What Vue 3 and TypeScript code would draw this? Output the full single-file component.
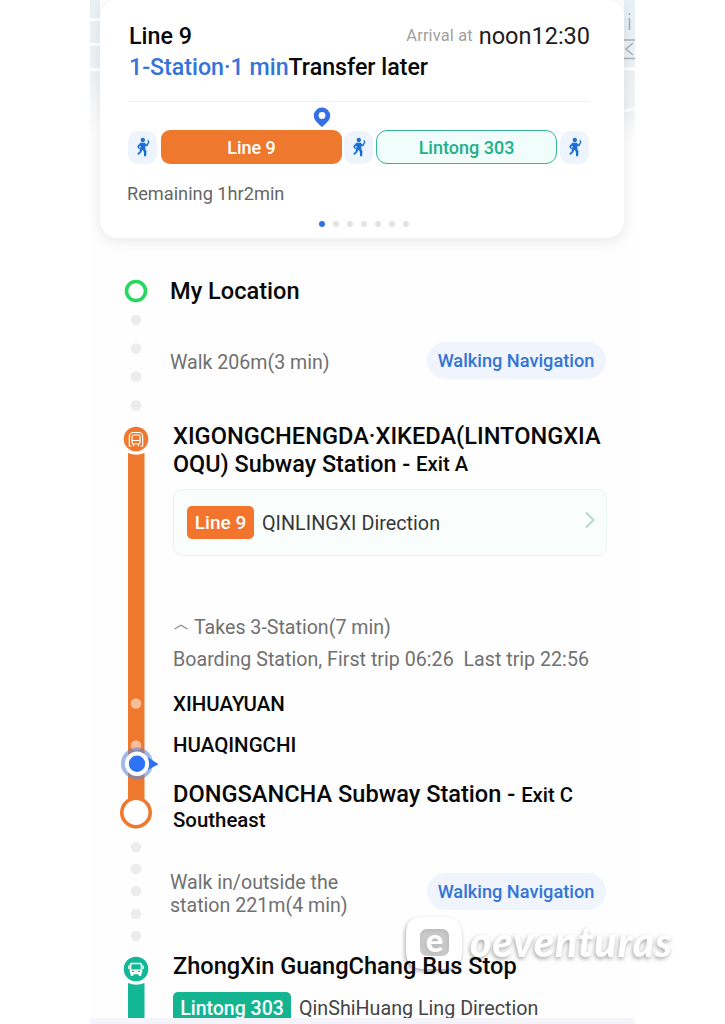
<script setup lang="ts">
interface Stop { name: string; cls: string }

const pages: number[] = [0, 1, 2, 3, 4, 5, 6]
const walkDots: number[] = [9, 37.5, 65.5, 94.5]
const transferDots: number[] = [12, 34, 56, 79, 101]
const stops: Stop[] = [
  { name: 'XIHUAYUAN', cls: 'stop-a' },
  { name: 'HUAQINGCHI', cls: 'stop-b' },
]
</script>

<template>
  <svg class="symbols" width="0" height="0" aria-hidden="true">
    <symbol id="walker" viewBox="0 0 16 22">
      <circle cx="7.800" cy="3" r="2.500" />
      <path d="M5 6h5l2 2 1.700-2.300L13 3.200l.9-.4 1.500 2.700-2.700 5-2-.8v3.800l1.300 2.400-.4 5.600H9.200l-.2-5L7.300 14l-1.200 3-3.500 3-1.200-1.300 2.800-2.900.8-4.400V9.200L3.500 10.500l1 2.500-1.300.7-1.800-3.700z" />
    </symbol>
  </svg>

  <div class="stage">
  <main class="screen">
    <header class="map">
      <div class="map-left"><i /><i /><i /></div>
      <div class="map-right">
        <svg width="12" height="125" viewBox="0 0 12 125">
          <path d="M5.500 18v12M5.500 13v2M0 40h11M0 58.500h11M9 43l-7 6 7 6" fill="none" stroke="#a9b1bb" stroke-width="1.600" />
          <path d="M0 69h11M0 111l11-3" stroke="#fff" stroke-width="3" />
        </svg>
      </div>
      <section class="card">
        <div class="headline">
          <span class="t line-title">Line 9</span>
          <span class="arrival"><span class="t arrival-label">Arrival at</span><span class="t arrival-time">noon12:30</span></span>
        </div>
        <div class="status"><span class="t status-blue">1-Station·1 min</span><span class="t status-next">Transfer later</span></div>
        <div class="legs">
          <span class="walk"><svg width="14" height="20"><use href="#walker" /></svg></span>
          <span class="leg orange">
            <span class="t">Line 9</span>
            <svg class="pin" width="18" height="21" viewBox="0 0 18 21">
              <path d="M9 .5a8.200 8.200 0 0 0-8.200 8.200c0 4.800 4.300 7.400 8.200 11.600 3.900-4.200 8.200-6.800 8.200-11.600A8.200 8.200 0 0 0 9 .5z" fill="#3470e4" />
              <circle cx="9" cy="8.500" r="3.400" fill="#fff" />
            </svg>
          </span>
          <span class="walk"><svg width="14" height="20"><use href="#walker" /></svg></span>
          <span class="leg green"><span class="t">Lintong 303</span></span>
          <span class="walk"><svg width="14" height="20"><use href="#walker" /></svg></span>
        </div>
        <div class="t remaining">Remaining 1hr2min</div>
        <div class="pager"><i v-for="p in pages" :key="p" :class="{ active: p === 0 }" /></div>
      </section>
    </header>

    <section class="row origin">
      <svg class="rail" width="50" height="41" viewBox="0 0 50 41">
        <circle cx="26" cy="21" r="9.500" fill="#fff" stroke="#25d95f" stroke-width="3.600" />
      </svg>
      <h2 class="t place origin-name">My Location</h2>
    </section>

    <section class="row walking first">
      <svg class="rail" width="50" height="110" viewBox="0 0 50 110">
        <circle v-for="y in walkDots" :key="y" cx="26" :cy="y" r="5.300" fill="#ececec" />
      </svg>
      <p class="t muted walk-a">Walk 206m(3 min)</p>
      <button class="nav"><span class="t">Walking Navigation</span></button>
    </section>

    <section class="row ride">
      <svg class="rail" width="54" height="414" viewBox="0 0 54 414">
        <circle cx="26" cy="18" r="12.300" fill="#ee792e" />
        <g fill="none" stroke="#fff" stroke-width="1.200">
          <path d="M21.500 25h-2.200v-9.500a4 4 0 0 1 4-4h5.400a4 4 0 0 1 4 4V25h-2.200" />
          <rect x="22" y="14" width="8" height="9" rx="1.500" />
          <path d="M22 19.500h8M23.500 23v2.200M28.500 23v2.200" />
        </g>
        <path d="M18 32q8 3.500 16.500 0v349h-16.500z" fill="#ee792e" />
        <circle cx="26" cy="282.500" r="5.300" fill="#f6bd98" />
        <circle cx="26" cy="324.500" r="5.300" fill="#f6bd98" />
        <circle cx="26" cy="391.500" r="14.200" fill="#fff" stroke="#ee792e" stroke-width="3.600" />
        <circle cx="27" cy="342.500" r="16" fill="#5c86d8" fill-opacity=".58" />
        <path d="M38 336.500l10.500 6.700-10.500 5.500z" fill="#2b6ef0" />
        <circle cx="27" cy="342.800" r="10.200" fill="#2f73f5" stroke="#fff" stroke-width="4" />
      </svg>
      <div class="details">
        <h2 class="place station"><span class="t station-1">XIGONGCHENGDA·XIKEDA(LINTONGXIA</span><span class="station-row"><span class="t station-2">OQU) Subway Station - </span><span class="t exit-a">Exit A</span></span></h2>
        <div class="direction">
          <span class="badge orange-bg"><span class="t">Line 9</span></span>
          <span class="t direction-name">QINLINGXI Direction</span>
          <svg class="chevron" width="12" height="18" viewBox="0 0 12 18"><path d="M2 1.500l7.500 7.500L2 16.500" fill="none" stroke="#b6d9cd" stroke-width="2" /></svg>
        </div>
        <div class="takes">
          <svg width="14" height="6" viewBox="0 0 14 6"><path d="M.5 5L7 1.300 13.500 5" fill="none" stroke="#8a8a8a" stroke-width="1.200" /></svg>
          <span class="t muted takes-text">Takes 3-Station(7 min)</span>
        </div>
        <p class="t muted boarding">Boarding Station, First trip 06:26&nbsp; Last trip 22:56</p>
        <p v-for="s in stops" :key="s.name" class="stop" :class="s.cls"><span class="t">{{ s.name }}</span></p>
        <h2 class="place final"><span class="t final-name">DONGSANCHA Subway Station - </span><span class="t exit-c">Exit C</span></h2>
        <p class="t southeast">Southeast</p>
      </div>
    </section>

    <section class="row walking second">
      <svg class="rail" width="50" height="115" viewBox="0 0 50 115">
        <circle v-for="y in transferDots" :key="y" cx="26" :cy="y" r="5.300" fill="#ececec" />
      </svg>
      <p class="muted two-line"><span class="t walk-b">Walk in/outside the</span><span class="t walk-c">station 221m(4 min)</span></p>
      <button class="nav"><span class="t">Walking Navigation</span></button>
    </section>

    <section class="row bus">
      <svg class="rail" width="50" height="68" viewBox="0 0 50 68">
        <circle cx="26" cy="19" r="12.300" fill="#12b896" />
        <rect x="20.500" y="13.500" width="11" height="10" rx="1.500" fill="none" stroke="#fff" stroke-width="1.600" />
        <path d="M20 19.500h12v4H20zM20.800 23h2.500v3h-2.500zM28.700 23h2.500v3h-2.500zM18.200 15.500h1.300v3.500h-1.300zM32.500 15.500h1.300v3.500h-1.300z" fill="#fff" />
        <path d="M22 21.300h2M28 21.300h2" stroke="#12b896" stroke-width="1.200" />
        <path d="M18 33q8 3.500 16.500 0v35h-16.500z" fill="#12b896" />
      </svg>
      <div class="details">
        <h2 class="place bus-name"><span class="t">ZhongXin GuangChang Bus Stop</span></h2>
        <div class="bus-line"><span class="badge green-bg"><span class="t">Lintong 303</span></span><span class="t bus-direction">QinShiHuang Ling Direction</span></div>
      </div>
    </section>
    <footer class="bottom" />
  </main>

    <div class="watermark">
      <svg width="60" height="60" viewBox="0 0 60 60">
        <path fill-rule="evenodd" d="M18 2h22q18 0 18 18v16q0 18-18 18H20Q2 54 2 36V18Q2 2 18 2zM24 14q-8 0-8 8v11q0 8 8 8h13q8 0 8-8V22q0-8-8-8z" fill="#fff" />
        <rect x="16" y="14" width="29" height="27" rx="8" fill="#c4c4c4" fill-opacity=".55" />
        <text x="30.500" y="37" text-anchor="middle" class="mark-e">e</text>
      </svg>
      <span class="t mark-text">oeventuras</span>
    </div>
  </div>
</template>

<style>
body { margin: 0; background: #fff; }
</style>

<style scoped>
.symbols { position: absolute; }
.stage { position: relative; width: 725px; height: 1024px; overflow: hidden; }
.screen { width: 545px; height: 1024px; margin-left: 90px; overflow: hidden; background: #fefefe; font-family: Roboto, "Liberation Sans", sans-serif; color: #080808; display: flex; flex-direction: column; }
.screen * { box-sizing: border-box; }
.t { white-space: pre; }
h2, p { margin: 0; font-weight: 500; }
.map { height: 270px; flex: none; display: grid; grid-template-columns: 10px 524px 11px; }
.map-left { height: 135px; background: linear-gradient(#e9f0f3, #f0f3f6 60%, #fefefe); display: flex; flex-direction: column; gap: 22px; padding-top: 18px; }
.map-left i { height: 3px; background: #fff; }
.map-right { grid-column: 3; grid-row: 1; height: 140px; background: linear-gradient(#e6f0f8, #eef1f4 50%, #f2f3f5 80%, #fefefe); }
.card { grid-column: 2; grid-row: 1; height: 238px; border-radius: 17px; background: #fff; box-shadow: 0 3px 14px rgba(0, 0, 0, .09); padding: 20px 34px 0 28px; display: flex; flex-direction: column; position: relative; }
.headline { display: flex; justify-content: space-between; align-items: center; height: 31px; padding-left: 1px; }
.line-title { font-size: 23.300px; font-weight: 500; }
.arrival { display: flex; align-items: center; gap: 6px; }
.arrival-label { font-size: 16.400px; color: #a0a0a0; letter-spacing: .15px; }
.arrival-time { font-size: 23.500px; color: #1c1c1c; }
.status { display: flex; height: 32px; margin-bottom: 2px; align-items: center; padding-left: 1px; font-size: 23.200px; font-weight: 500; }
.status-blue { color: #3473d9; }
.legs { border-top: 1px solid #f0f0f0; margin-top: 16px; height: 62px; padding-top: 29px; display: flex; align-items: center; gap: 4px; }
.walk { width: 29px; height: 33px; border-radius: 10px; background: #edf4fb; display: flex; align-items: center; justify-content: center; flex: none; }
.walk svg { fill: #1c6fd2; }
.leg { position: relative; width: 181px; height: 34px; border-radius: 9px; display: flex; align-items: center; justify-content: center; font-size: 18px; font-weight: 500; flex: none; }
.leg.orange { background: #ee792e; color: #fff; margin-right: -2px; }
.leg.green { background: #f0fdfa; border: 1.500px solid #35b699; color: #20af8a; border-radius: 11px; margin-left: -1px; margin-right: -1px; }
.pin { position: absolute; left: 152px; top: -23px; }
.remaining { font-size: 18.200px; color: #666; line-height: 24px; margin: 19px 0 0 -1px; }
.pager { display: flex; gap: 8px; margin: 15px 0 0 190.500px; }
.pager i { width: 6px; height: 6px; border-radius: 50%; background: #e2e2e2; }
.pager .active { background: #3470e4; }
.row { display: flex; align-items: flex-start; padding-left: 20px; flex: none; }
.rail { flex: none; }
.origin { height: 41px; }
.origin-name { margin-left: 10px; line-height: 42px; }
.place { font-size: 23.600px; }
.muted { color: #707070; font-weight: 400; font-size: 19.600px; }
.walking { padding-right: 29px; }
.first { height: 110px; }
.walk-a { margin: 39px auto 0 10px; line-height: 26px; }
.nav { border: 0; font: 500 18.200px Roboto, sans-serif; color: #3475d3; background: #eff4fd; width: 179px; height: 37px; border-radius: 19px; padding: 0 1px 0 0; flex: none; display: flex; align-items: center; justify-content: center; }
.first .nav { margin-top: 31px; }
.ride { height: 414px; }
.ride .rail { margin-right: 9px; }
.details { display: flex; flex-direction: column; align-items: flex-start; }
.station { line-height: 28px; padding-top: 1px; display: flex; flex-direction: column; }
.station-2 { font-size: 23.400px; }
.station-row { display: flex; height: 28px; }
.exit-a, .exit-c { font-size: 20.300px; }
.direction { width: 434px; height: 67px; margin-top: 11px; border: 1px solid #eaf5f1; border-radius: 9px; background: #f9fefc; display: flex; align-items: center; padding: 0 10px 0 13px; }
.badge { color: #fff; font-size: 19px; font-weight: 500; height: 33px; display: flex; justify-content: center; align-items: center; border-radius: 5px; flex: none; }
.orange-bg { width: 67px; background: #f3742c; }
.direction-name { margin-left: 8px; font-size: 19.800px; color: #383838; padding-top: 2px; }
.chevron { margin: -6px 0 0 auto; }
.takes { display: flex; align-items: center; height: 28px; margin-top: 57px; gap: 6px; padding-left: 1px; }
.boarding { line-height: 30px; margin-top: 4px; letter-spacing: .03px; }
.stop { font-size: 20.500px; line-height: 30px; }
.stop-a { margin-top: 14px; }
.stop-b { margin-top: 11px; }
.final { line-height: 30px; margin-top: 19px; }
.southeast { font-size: 20.400px; line-height: 24px; margin-top: -2px; }
.second { height: 115px; }
.two-line { display: flex; flex-direction: column; line-height: 23px; margin: 36px auto 0 10px; }
.second .nav { margin-top: 38px; }
.bus { height: 68px; overflow: hidden; }
.bus .details { margin-left: 13px; }
.bus-name { line-height: 32px; margin-bottom: 2px; position: relative; z-index: 2; }
.bus-line { display: flex; align-items: center; margin-top: 8px; gap: 8px; }
.green-bg { width: 118px; background: #12b58f; font-size: 19.500px; }
.bus-direction { font-size: 19.700px; color: #444; }
.bottom { height: 6px; background: #f5f4fa; }
.watermark { position: absolute; left: 404px; top: 915px; display: flex; filter: drop-shadow(-1px 2px 2px rgba(0, 0, 0, .34)); }
.mark-e { font: 900 33px Lato, sans-serif; fill: #fff; }
.mark-text { font: italic 900 41px Lato, sans-serif; letter-spacing: 1px; color: #fff; line-height: 54px; margin-left: 6px; }
</style>
